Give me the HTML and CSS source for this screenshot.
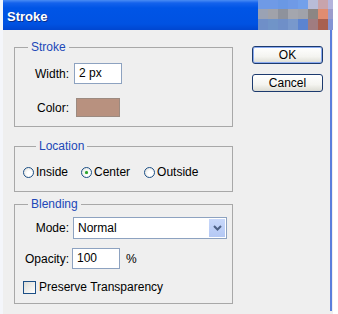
FILE: index.html
```html
<!DOCTYPE html>
<html lang="en">
<head>
    <meta charset="UTF-8">
    <meta name="viewport" content="width=device-width, initial-scale=1.0">
    <title>Stroke</title>
    <link rel="stylesheet" href="styles.css">
</head>
<body>
    <div class="dialog">
        <div class="titlebar">
            <span class="title">Stroke</span>
            <!-- blurred corner of the screen capture -->
            <div class="mosaic">
                <i class="c1"></i><i class="c1"></i><i class="c2"></i><i class="c1"></i><i class="c3"></i><i class="c4"></i><i class="c5"></i><i class="c6"></i>
                <i class="c7"></i><i class="c8"></i><i class="c9"></i><i class="c10"></i><i class="c8"></i><i class="c11"></i><i class="c12"></i><i class="c13"></i>
                <i class="c14"></i><i class="c15"></i><i class="c14"></i><i class="c16"></i><i class="c17"></i><i class="c18"></i><i class="c19"></i><i class="c20"></i>
            </div>
        </div>
        <div class="content">
            <div class="groups">
                <fieldset class="group group-stroke">
                    <legend>Stroke</legend>
                    <div class="row">
                        <label>Width:</label>
                        <span class="field field-width">2 px</span>
                    </div>
                    <div class="row row-color">
                        <label>Color:</label>
                        <span class="swatch"></span>
                    </div>
                </fieldset>

                <fieldset class="group group-location">
                    <legend>Location</legend>
                    <div class="radios">
                        <span class="radio"><span class="dot"></span>Inside</span>
                        <span class="radio checked"><span class="dot"></span>Center</span>
                        <span class="radio"><span class="dot"></span>Outside</span>
                    </div>
                </fieldset>

                <fieldset class="group group-blending">
                    <legend>Blending</legend>
                    <div class="row">
                        <label>Mode:</label>
                        <span class="select">
                            <span class="select-value">Normal</span>
                            <span class="select-arrow">
                                <svg width="9" height="6" viewBox="0 0 9 6"><path d="M1 1 L4.5 4.5 L8 1" fill="none" stroke="#4d6185" stroke-width="2"/></svg>
                            </span>
                        </span>
                    </div>
                    <div class="row row-opacity">
                        <label>Opacity:</label>
                        <span class="field field-opacity">100</span>
                        <span class="unit">%</span>
                    </div>
                    <div class="check">
                        <span class="box"></span>Preserve Transparency
                    </div>
                </fieldset>
            </div>
            <div class="buttons">
                <button class="btn btn-default">OK</button>
                <button class="btn">Cancel</button>
            </div>
        </div>
    </div>
</body>
</html>
```

FILE: styles.css
```css
body {
    margin: 0;
    padding: 0;
    font-family: "Liberation Sans", Arial, sans-serif;
    font-size: 12px;
    color: #000;
    background-color: #fff;
}
.dialog {
    width: 338px;
    height: 314px;
    background-color: #efefef;
    border-left: 3px solid #f4f6fb;
    border-right: 5px solid #fff;
    box-sizing: border-box;
    position: relative;
    overflow: hidden;
}
.dialog::after {
    content: "";
    position: absolute;
    right: 1px;
    top: 30px;
    bottom: 3px;
    width: 2px;
    background-color: #5a7fdc;
}
.titlebar {
    height: 30px;
    margin-left: -3px;
    margin-right: -5px;
    background: linear-gradient(to bottom, #4a8cf4 0, #1462ec 3px, #0055e6 8px, #0052e2 24px, #0046d0 30px);
    position: relative;
    display: flex;
    align-items: center;
}
.title {
    color: #fff;
    font-weight: bold;
    font-size: 13px;
    padding-left: 7px;
    margin-top: 2px;
    text-shadow: 1px 1px 0 #0a2f8a;
}
.mosaic {
    position: absolute;
    top: 0;
    right: 0;
    width: 80px;
    height: 30px;
    display: grid;
    grid-template-columns: repeat(8, 10px);
    grid-template-rows: 9px 10px 11px;
}
.c1 { background: #6f9ae6; }
.c2 { background: #6a98e4; }
.c3 { background: #72a0ea; }
.c4 { background: #b8bcd8; }
.c5 { background: #c8a4ac; }
.c6 { background: #b4b4dc; }
.c7 { background: #9aa2b4; }
.c8 { background: #a0a2aa; }
.c9 { background: #8e929c; }
.c10 { background: #a4a6ae; }
.c11 { background: #8c8684; }
.c12 { background: #e08c70; }
.c13 { background: #9c9ccc; }
.c14 { background: #6f8fc8; }
.c15 { background: #7094c8; }
.c16 { background: #7898cc; }
.c17 { background: #5c84d0; }
.c18 { background: #a07c80; }
.c19 { background: #a86050; }
.c20 { background: #8494d4; }

.content {
    display: flex;
    padding: 10px 0 0 11px;
}
.groups {
    width: 219px;
}
.group {
    margin: 0;
    padding: 0;
    border: 1px solid #a8a8a8;
    min-width: 0;
}
.group legend {
    margin-left: 13px;
    padding: 0 3px;
    line-height: 14px;
    color: #2148b8;
}
.row {
    display: flex;
    align-items: center;
}
.row label {
    width: 54px;
    text-align: right;
    margin-right: 5px;
}
.field {
    height: 19px;
    line-height: 19px;
    border: 1px solid #8da2c0;
    background-color: #fff;
    padding-left: 4px;
    box-sizing: content-box;
}
.group-stroke {
    padding-bottom: 9px;
}
.group-stroke .row {
    margin-top: 9px;
}
.field-width {
    width: 42px;
}
.group-stroke .row-color {
    margin-top: 14px;
}
.swatch {
    margin-left: 2px;
    width: 42px;
    height: 17px;
    background-color: #b8917f;
    border: 1px solid #9c8a80;
}

.group-location {
    margin-top: 12px;
    padding: 12px 0 12px 8px;
}
.radios {
    display: flex;
    align-items: center;
    height: 14px;
}
.radio {
    display: flex;
    align-items: center;
    margin-right: 14px;
}
.radio:first-child {
    margin-right: 13px;
}
.dot {
    width: 9px;
    height: 9px;
    border: 1px solid #1c4f86;
    border-radius: 50%;
    background: radial-gradient(circle at 60% 60%, #fff 30%, #dcdcd6 100%);
    margin-right: 2px;
    display: flex;
    align-items: center;
    justify-content: center;
}
.radio.checked .dot::after {
    content: "";
    width: 3px;
    height: 3px;
    border-radius: 50%;
    background-color: #2da12d;
    box-shadow: 0 0 1px #5ac85a;
}

.group-blending {
    margin-top: 5px;
    padding: 6px 0 9px 0;
}
.select {
    width: 152px;
    height: 20px;
    border: 1px solid #8da2c0;
    background-color: #fff;
    display: flex;
    align-items: center;
    margin-left: -1px;
}
.select-value {
    flex: 1;
    padding-left: 4px;
}
.select-arrow {
    width: 16px;
    height: 18px;
    margin-right: 1px;
    background: linear-gradient(to bottom, #c8d8fa, #b4c8f4);
    display: flex;
    align-items: center;
    justify-content: center;
}
.row-opacity {
    margin-top: 9px;
}
.field-opacity {
    width: 42px;
    margin-left: -2px;
}
.unit {
    margin-left: 6px;
}
.check {
    display: flex;
    align-items: center;
    margin: 11px 0 0 8px;
}
.box {
    width: 11px;
    height: 11px;
    border: 1px solid #1c4f86;
    background: linear-gradient(135deg, #dcdcd6, #fff);
    margin-right: 3px;
}

.buttons {
    margin-left: 19px;
    display: flex;
    flex-direction: column;
    padding-top: 6px;
}
.btn {
    width: 71px;
    height: 18px;
    margin: 0 0 10px 0;
    padding: 0;
    font-family: "Liberation Sans", Arial, sans-serif;
    font-size: 12px;
    color: #000;
    border: 1px solid #1c3a6e;
    border-radius: 3px;
    background: linear-gradient(to bottom, #fff 0, #f4f4f0 60%, #dcdcd4 100%);
}
.btn-default {
    box-shadow: inset 0 0 0 1px #8aaaf0;
}
```
